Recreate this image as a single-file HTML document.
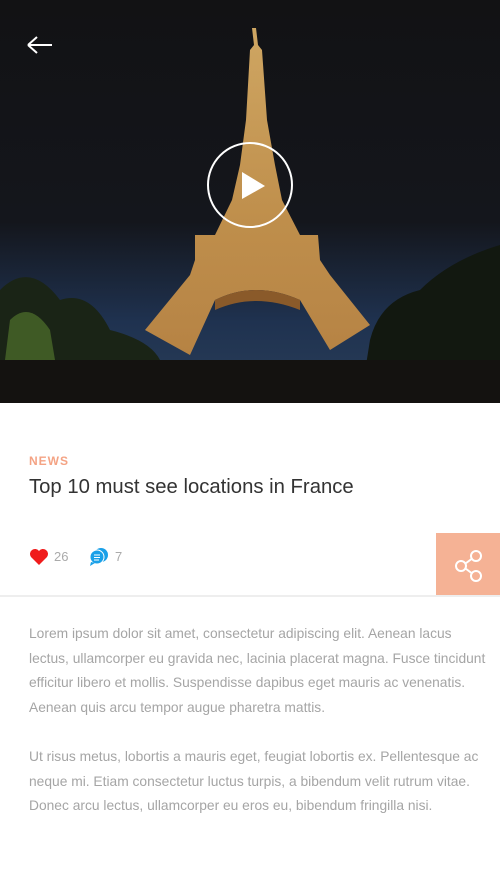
<!DOCTYPE html>
<html><head><meta charset="utf-8"><style>
body{margin:0;width:500px;height:889px;background:#fff;font-family:"Liberation Sans",sans-serif;overflow:hidden;position:relative}
.hero{position:absolute;left:0;top:0;width:500px;height:403px}
.news{position:absolute;left:29px;top:454px;font-size:12px;letter-spacing:1px;color:#f4a384;font-weight:bold}
.title{position:absolute;left:29px;top:476px;font-size:20.3px;color:#333}
.stats{position:absolute;left:29px;top:547px;font-size:13px;color:#aaa}
.share{position:absolute;left:436px;top:533px;width:64px;height:63px;background:#f5b295}
.hr{position:absolute;left:0;top:595px;width:500px;height:2px;background:#eee}
.p{position:absolute;left:29px;width:466px;font-size:13.8px;line-height:24.5px;color:#a5a5a5}
</style></head><body>
<svg class="hero" viewBox="0 0 500 403">
<defs>
<linearGradient id="sky" x1="0" y1="0" x2="0" y2="1"><stop offset="0" stop-color="#121214"/><stop offset="0.55" stop-color="#14161c"/><stop offset="0.8" stop-color="#1f3250"/><stop offset="1" stop-color="#2a3e58"/></linearGradient>
<linearGradient id="tw" x1="0" y1="0" x2="0" y2="1"><stop offset="0" stop-color="#f0c070"/><stop offset="1" stop-color="#d09040"/></linearGradient>
</defs>
<rect width="500" height="403" fill="url(#sky)"/>
<path d="M252 28 L256 28 L258 45 L262 50 L267 120 L275 165 L282 200 L300 235 L318 235 L320 260 L330 275 L370 325 L330 350 L300 300 Q255 280 215 300 L190 355 L145 330 L190 275 L195 260 L195 235 L215 235 L232 200 L240 165 L246 120 L250 50 L254 45Z" fill="url(#tw)" opacity="0.85"/>
<path d="M215 300 Q255 280 300 300 L300 310 Q255 292 215 310Z" fill="#8a5a2a"/>
<path d="M0 290 Q30 260 60 300 Q90 290 110 330 Q150 340 160 360 L160 403 L0 403Z" fill="#1a2416"/>
<path d="M500 245 Q450 260 420 290 Q380 300 370 340 L360 403 L500 403Z" fill="#121810"/>
<rect x="0" y="360" width="500" height="43" fill="#141210"/>
<path d="M10 320 Q30 300 50 330 L55 360 L5 360Z" fill="#3f5a25"/>
<path d="M28 45 H52 M28 45 L37 37 M28 45 L37 53" stroke="#fff" stroke-width="2" fill="none"/>
<circle cx="250" cy="185" r="42" fill="none" stroke="#fff" stroke-width="2"/>
<path d="M242 172 L265 186 L242 199Z" fill="#fff"/>
</svg>
<div class="news">NEWS</div>
<div class="title">Top 10 must see locations in France</div>
<div class="stats">
<svg width="20" height="18" viewBox="0 0 20 18" style="position:absolute;left:0;top:1px"><path d="M10 17 L2 9 A4.5 4.5 0 0 1 10 3 A4.5 4.5 0 0 1 18 9Z" fill="#f01c1c"/></svg>
<span style="position:absolute;left:25px;top:2px">26</span>
<svg width="22" height="20" viewBox="0 0 22 20" style="position:absolute;left:59px;top:0"><circle cx="13" cy="8" r="7" fill="#1aa0e8"/><circle cx="9" cy="10" r="7" fill="#1aa0e8" stroke="#fff" stroke-width="1"/><path d="M3 15 L2 19 L7 16Z" fill="#1aa0e8"/><path d="M6 8h6M6 10.5h6M6 13h5" stroke="#fff" stroke-width="1"/></svg>
<span style="position:absolute;left:86px;top:2px">7</span>
</div>
<div class="share"><svg width="64" height="63" viewBox="0 0 64 63"><g fill="none" stroke="#fff" stroke-width="2"><circle cx="40" cy="23" r="5"/><circle cx="25" cy="33" r="5"/><circle cx="40" cy="43" r="5"/><path d="M29.5 30.5L35.5 26M29.5 35.5L35.5 40"/></g></svg></div>
<div class="hr"></div>
<div class="p" style="top:622px">Lorem ipsum dolor sit amet, consectetur adipiscing elit. Aenean lacus lectus, ullamcorper eu gravida nec, lacinia placerat magna. Fusce tincidunt efficitur libero et mollis. Suspendisse dapibus eget mauris ac venenatis. Aenean quis arcu tempor augue pharetra mattis.</div>
<div class="p" style="top:745px">Ut risus metus, lobortis a mauris eget, feugiat lobortis ex. Pellentesque ac neque mi. Etiam consectetur luctus turpis, a bibendum velit rutrum vitae. Donec arcu lectus, ullamcorper eu eros eu, bibendum fringilla nisi.</div>
</body></html>
